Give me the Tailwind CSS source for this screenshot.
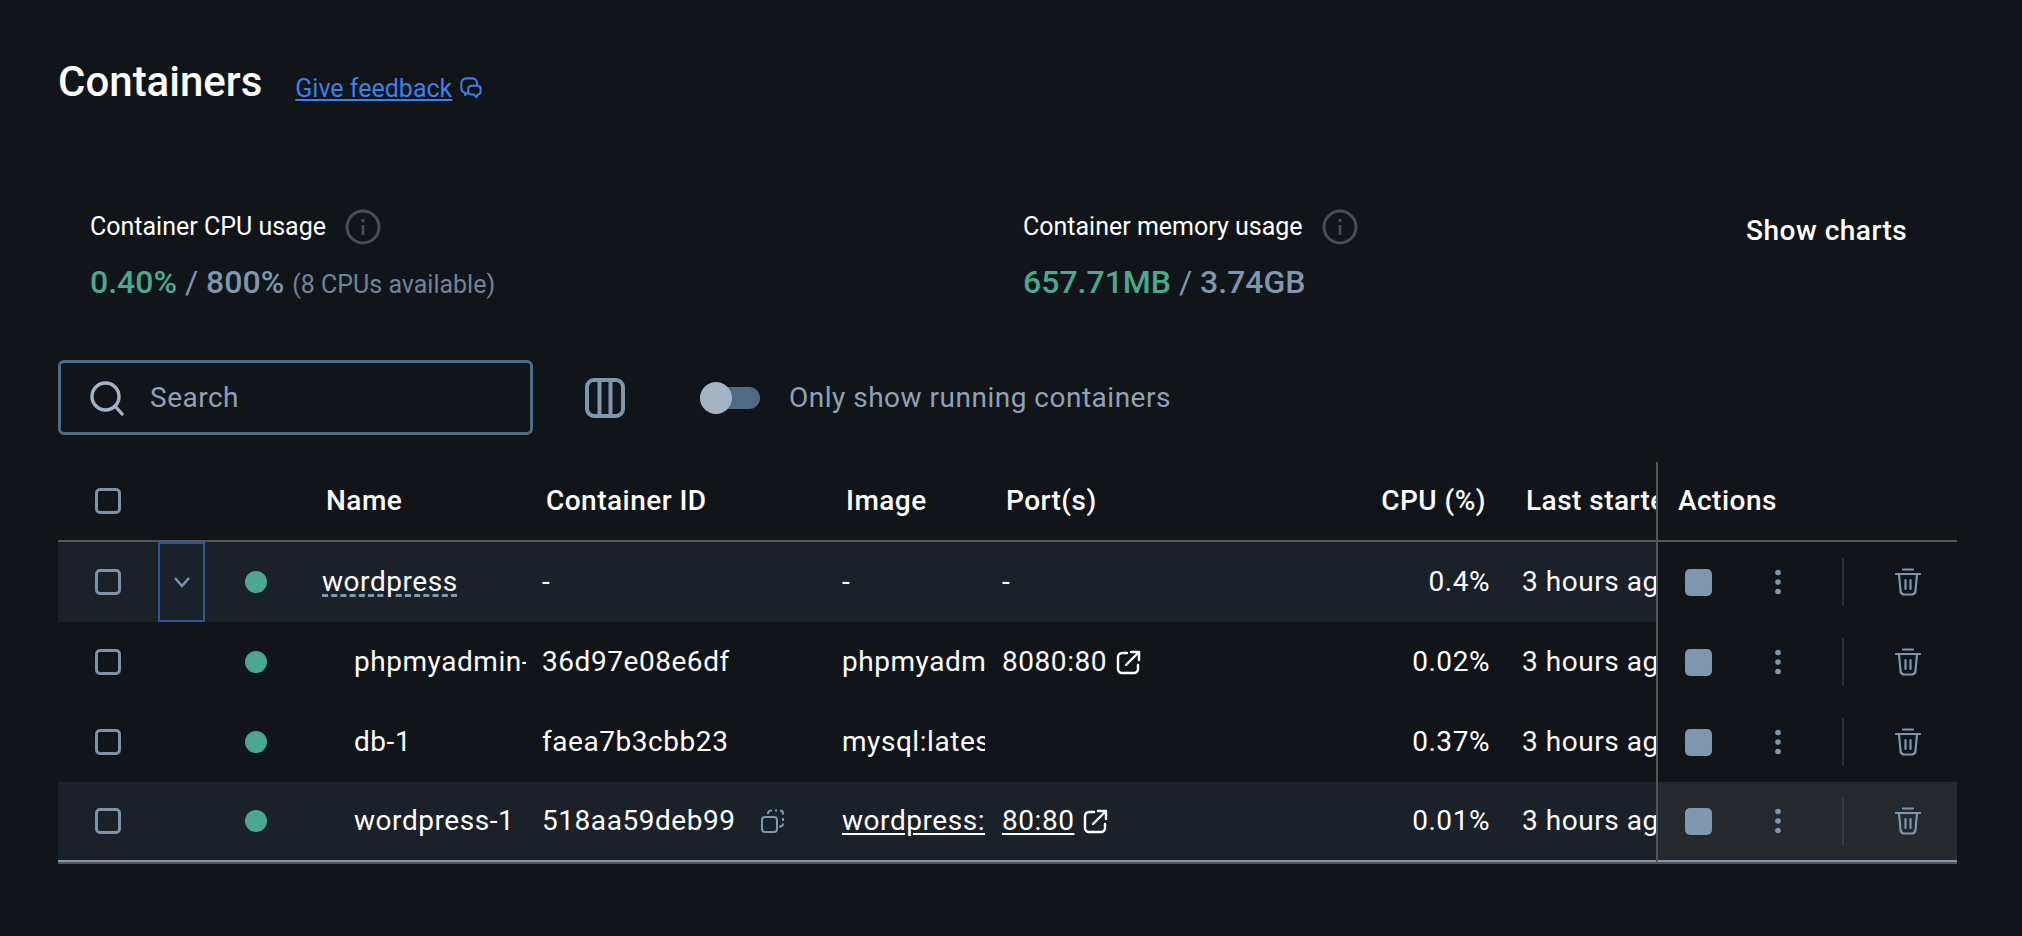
<!DOCTYPE html>
<html>
<head>
<meta charset="utf-8">
<script src="https://cdn.jsdelivr.net/npm/@tailwindcss/browser@4"></script>
</head>
<body class="m-0 h-[936px] w-[2022px] overflow-hidden bg-[#11151a] font-['Roboto',sans-serif] text-white">
<div class="flex w-[1899px] flex-col ml-[58px]">
  <!-- Title -->
  <div class="flex h-[64px] items-center mt-[50px]">
    <h1 class="text-[42px] font-medium leading-none">Containers</h1>
    <a class="ml-[33px] mt-[12px] text-[25px] leading-none text-[#3f7fe8] underline underline-offset-2">Give feedback</a>
    <svg class="ml-[8px] mt-[12px]" width="22" height="22" viewBox="0 0 24 24" fill="none" stroke="#3f7fe8" stroke-width="2.200" stroke-linejoin="round"><path d="M10 17.500H8l-2.500 2.200v-2.600A5 5 0 0 1 1.500 12V6.500a5 5 0 0 1 5-5h7a5 5 0 0 1 5 5v3"/><path d="M12.500 9.500h7a3.500 3.500 0 0 1 3 3.500v2.500a3.500 3.500 0 0 1-3 3.500l-1.500 3-3-3h-2.500a3.500 3.500 0 0 1-3.500-3.500V13a3.500 3.500 0 0 1 3.500-3.500Z"/></svg>
  </div>
  <!-- Stats -->
  <div class="flex h-[130px] mt-[90px] pl-[32px] relative">
    <div class="w-[933px]">
      <div class="flex h-[36px] items-center mt-[5px] text-[25px]">Container CPU usage
        <svg class="ml-[19px]" width="36" height="36" viewBox="0 0 36 36" fill="none"><circle cx="18" cy="18" r="16" stroke="#4a4e53" stroke-width="3"/><circle cx="18" cy="11.500" r="1.800" fill="#4a4e53"/><path d="M18 16v10" stroke="#4a4e53" stroke-width="2.600"/></svg>
      </div>
      <div class="mt-[13px] flex h-[44px] items-baseline font-medium text-[32px] text-[#7e96ae]"><span class="text-[#4ba88f]">0.40%</span><span class="font-normal">&nbsp;/&nbsp;</span>800%<span class="ml-[8px] text-[25px] font-normal text-[#6f8499]">(8 CPUs available)</span></div>
    </div>
    <div class="w-[723px]">
      <div class="flex h-[36px] items-center mt-[5px] text-[25px]">Container memory usage
        <svg class="ml-[19px]" width="36" height="36" viewBox="0 0 36 36" fill="none"><circle cx="18" cy="18" r="16" stroke="#4a4e53" stroke-width="3"/><circle cx="18" cy="11.500" r="1.800" fill="#4a4e53"/><path d="M18 16v10" stroke="#4a4e53" stroke-width="2.600"/></svg>
      </div>
      <div class="mt-[13px] flex h-[44px] items-baseline font-medium text-[32px] text-[#7e96ae]"><span class="text-[#4ba88f]">657.71MB</span><span class="font-normal">&nbsp;/&nbsp;</span>3.74GB</div>
    </div>
    <div class="mt-[11px] text-[28px] font-medium leading-[32px] tracking-[0.500px] whitespace-nowrap">Show charts</div>
  </div>
  <!-- Toolbar -->
  <div class="flex h-[75px] items-center mt-[26px]">
    <div class="flex h-[75px] w-[475px] items-center rounded-[6px] border-[3px] border-[#4f6a85] pl-[28px]">
      <svg width="36" height="36" viewBox="0 0 36 36" fill="none" stroke="#a3b3c4" stroke-width="3.400"><circle cx="16.500" cy="16.500" r="13.500"/><path d="m26 26 7 8" stroke-linecap="round"/></svg>
      <span class="ml-[25px] text-[28px] tracking-[0.500px] text-[#8fa2b5]">Search</span>
    </div>
    <svg class="ml-[52px]" width="40" height="42" viewBox="0 0 40 42" fill="none" stroke="#7e96ae" stroke-width="4"><rect x="2" y="3" width="36" height="36" rx="7"/><path d="M14.500 3v36M25.500 3v36"/></svg>
    <div class="relative ml-[75px] h-[22px] w-[60px] rounded-full bg-[#4f6a85]">
      <div class="absolute left-0 top-[-5px] h-[32px] w-[32px] rounded-full bg-[#a3b3c4]"></div>
    </div>
    <span class="ml-[29px] text-[28px] tracking-[0.500px] text-[#8fa2b5]">Only show running containers</span>
  </div>
  <!-- Table -->
  <div class="mt-[27px] flex text-[28px] tracking-[0.550px]">
    <div class="w-[1598px]">
      <div class="flex h-[80px] items-center border-b-2 border-[#555] font-medium tracking-[0.470px]">
        <div class="w-[100px] pl-[37px]"><div class="h-[26px] w-[26px] rounded-[5px] border-[3px] border-[#7e92a6]"></div></div>
        <div class="w-[164px]"></div>
        <div class="w-[220px] pl-[4px]">Name</div>
        <div class="w-[300px] pl-[4px]">Container ID</div>
        <div class="w-[160px] pl-[4px]">Image</div>
        <div class="w-[320px] pl-[4px]">Port(s)</div>
        <div class="w-[200px] pr-[36px] text-right">CPU (%)</div>
        <div class="w-[134px] overflow-hidden whitespace-nowrap pl-[4px]">Last started</div>
      </div>
      <div class="flex h-[80px] items-center bg-[#1a2129]">
        <div class="w-[100px] pl-[37px]"><div class="h-[26px] w-[26px] rounded-[5px] border-[3px] border-[#7e92a6]"></div></div>
        <div class="flex h-full w-[47px] items-center justify-center border-2 border-[#2f5597]"><svg width="18" height="12" viewBox="0 0 18 12" fill="none" stroke="#7e96ae" stroke-width="2.400"><path d="m2 2 7 8 7-8"/></svg></div>
        <div class="w-[117px] pl-[40px]"><div class="h-[22px] w-[22px] rounded-full bg-[#4ba88f]"></div></div>
        <div class="w-[220px]"><span class="underline decoration-dashed decoration-[#7e96ae] decoration-[3px] underline-offset-[3px]">wordpress</span></div>
        <div class="w-[300px]">-</div>
        <div class="w-[160px]">-</div>
        <div class="w-[320px]">-</div>
        <div class="w-[200px] pr-[32px] text-right">0.4%</div>
        <div class="w-[134px] overflow-hidden whitespace-nowrap">3 hours ago</div>
      </div>
      <div class="flex h-[80px] items-center">
        <div class="w-[100px] pl-[37px]"><div class="h-[26px] w-[26px] rounded-[5px] border-[3px] border-[#7e92a6]"></div></div>
        <div class="w-[47px]"></div>
        <div class="w-[117px] pl-[40px]"><div class="h-[22px] w-[22px] rounded-full bg-[#4ba88f]"></div></div>
        <div class="w-[220px] pl-[32px] pr-[16px]"><div class="overflow-hidden whitespace-nowrap">phpmyadmin-1</div></div>
        <div class="w-[300px]">36d97e08e6df</div>
        <div class="w-[160px] pr-[17px]"><div class="overflow-hidden whitespace-nowrap">phpmyadmin:latest</div></div>
        <div class="flex w-[320px] items-center">8080:80
          <svg class="ml-[9px]" width="26" height="26" viewBox="0 0 26 26" fill="none" stroke="#fff" stroke-width="2.400" stroke-linecap="round" stroke-linejoin="round"><path d="M11 4H6a4 4 0 0 0-4 4v12a4 4 0 0 0 4 4h12a4 4 0 0 0 4-4v-4"/><path d="M10 16 23 3M15 3h8v8"/></svg>
        </div>
        <div class="w-[200px] pr-[32px] text-right">0.02%</div>
        <div class="w-[134px] overflow-hidden whitespace-nowrap">3 hours ago</div>
      </div>
      <div class="flex h-[80px] items-center">
        <div class="w-[100px] pl-[37px]"><div class="h-[26px] w-[26px] rounded-[5px] border-[3px] border-[#7e92a6]"></div></div>
        <div class="w-[47px]"></div>
        <div class="w-[117px] pl-[40px]"><div class="h-[22px] w-[22px] rounded-full bg-[#4ba88f]"></div></div>
        <div class="w-[220px] pl-[32px] pr-[16px]"><div class="overflow-hidden whitespace-nowrap">db-1</div></div>
        <div class="w-[300px]">faea7b3cbb23</div>
        <div class="w-[160px] pr-[17px]"><div class="overflow-hidden whitespace-nowrap">mysql:latest</div></div>
        <div class="w-[320px]"></div>
        <div class="w-[200px] pr-[32px] text-right">0.37%</div>
        <div class="w-[134px] overflow-hidden whitespace-nowrap">3 hours ago</div>
      </div>
      <div class="flex h-[80px] items-center border-b-2 border-[#7e96ae] bg-[#1a2129]">
        <div class="w-[100px] pl-[37px]"><div class="h-[26px] w-[26px] rounded-[5px] border-[3px] border-[#7e92a6]"></div></div>
        <div class="w-[47px]"></div>
        <div class="w-[117px] pl-[40px]"><div class="h-[22px] w-[22px] rounded-full bg-[#4ba88f]"></div></div>
        <div class="w-[220px] pl-[32px] pr-[16px]"><div class="overflow-hidden whitespace-nowrap">wordpress-1</div></div>
        <div class="flex w-[300px] items-center">518aa59deb99
          <svg class="ml-[24px]" width="24" height="24" viewBox="0 0 24 24" fill="none" stroke="#7e96ae" stroke-width="2"><rect x="2" y="8" width="15" height="15" rx="3"/><path d="M8 5V4.500a3 3 0 0 1 3-3h1M15 1.500h2M20 1.500a3 3 0 0 1 3 3v1M23 9v3M23 14.500a3 3 0 0 1-3 3h-1"/></svg>
        </div>
        <div class="w-[160px] pr-[17px]"><div class="overflow-hidden whitespace-nowrap underline underline-offset-[3px]">wordpress:latest</div></div>
        <div class="flex w-[320px] items-center"><span class="underline underline-offset-[3px]">80:80</span>
          <svg class="ml-[9px]" width="26" height="26" viewBox="0 0 26 26" fill="none" stroke="#fff" stroke-width="2.400" stroke-linecap="round" stroke-linejoin="round"><path d="M11 4H6a4 4 0 0 0-4 4v12a4 4 0 0 0 4 4h12a4 4 0 0 0 4-4v-4"/><path d="M10 16 23 3M15 3h8v8"/></svg>
        </div>
        <div class="w-[200px] pr-[32px] text-right">0.01%</div>
        <div class="w-[134px] overflow-hidden whitespace-nowrap">3 hours ago</div>
      </div>
      <div class="h-[2px] bg-[#555]"></div>
    </div>
    <div class="w-[301px] border-l-2 border-[#555]">
      <div class="flex h-[80px] items-center border-b-2 border-[#555] pl-[20px] font-medium tracking-[0.470px]">Actions</div>
      <div class="flex h-[80px] items-center pl-[27px]">
        <div class="h-[27px] w-[27px] rounded-[5px] bg-[#7e96ae]"></div>
        <svg class="ml-[62px]" width="8" height="28" viewBox="0 0 8 28" fill="#7e96ae"><circle cx="4" cy="4.500" r="2.800"/><circle cx="4" cy="14" r="2.800"/><circle cx="4" cy="23.500" r="2.800"/></svg>
        <div class="ml-[60px] h-[48px] w-[2px] bg-[#2a2e33]"></div>
        <svg class="ml-[51px]" width="26" height="28" viewBox="0 0 26 28" fill="none" stroke="#7e96ae" stroke-width="2.200" stroke-linecap="round" stroke-linejoin="round"><path d="M8 1.500h10M1 6h24M4 6l1.500 17a4 4 0 0 0 4 3.500h7a4 4 0 0 0 4-3.500L22 6M10.500 12v9M15.500 12v9"/></svg>
      </div>
      <div class="flex h-[80px] items-center pl-[27px]">
        <div class="h-[27px] w-[27px] rounded-[5px] bg-[#7e96ae]"></div>
        <svg class="ml-[62px]" width="8" height="28" viewBox="0 0 8 28" fill="#7e96ae"><circle cx="4" cy="4.500" r="2.800"/><circle cx="4" cy="14" r="2.800"/><circle cx="4" cy="23.500" r="2.800"/></svg>
        <div class="ml-[60px] h-[48px] w-[2px] bg-[#2a2e33]"></div>
        <svg class="ml-[51px]" width="26" height="28" viewBox="0 0 26 28" fill="none" stroke="#7e96ae" stroke-width="2.200" stroke-linecap="round" stroke-linejoin="round"><path d="M8 1.500h10M1 6h24M4 6l1.500 17a4 4 0 0 0 4 3.500h7a4 4 0 0 0 4-3.500L22 6M10.500 12v9M15.500 12v9"/></svg>
      </div>
      <div class="flex h-[80px] items-center pl-[27px]">
        <div class="h-[27px] w-[27px] rounded-[5px] bg-[#7e96ae]"></div>
        <svg class="ml-[62px]" width="8" height="28" viewBox="0 0 8 28" fill="#7e96ae"><circle cx="4" cy="4.500" r="2.800"/><circle cx="4" cy="14" r="2.800"/><circle cx="4" cy="23.500" r="2.800"/></svg>
        <div class="ml-[60px] h-[48px] w-[2px] bg-[#2a2e33]"></div>
        <svg class="ml-[51px]" width="26" height="28" viewBox="0 0 26 28" fill="none" stroke="#7e96ae" stroke-width="2.200" stroke-linecap="round" stroke-linejoin="round"><path d="M8 1.500h10M1 6h24M4 6l1.500 17a4 4 0 0 0 4 3.500h7a4 4 0 0 0 4-3.500L22 6M10.500 12v9M15.500 12v9"/></svg>
      </div>
      <div class="flex h-[80px] items-center border-b-2 border-[#7e96ae] bg-[#25282d] pl-[27px]">
        <div class="h-[27px] w-[27px] rounded-[5px] bg-[#7e96ae]"></div>
        <svg class="ml-[62px]" width="8" height="28" viewBox="0 0 8 28" fill="#7e96ae"><circle cx="4" cy="4.500" r="2.800"/><circle cx="4" cy="14" r="2.800"/><circle cx="4" cy="23.500" r="2.800"/></svg>
        <div class="ml-[60px] h-[48px] w-[2px] bg-[#3a3e43]"></div>
        <svg class="ml-[51px]" width="26" height="28" viewBox="0 0 26 28" fill="none" stroke="#7e96ae" stroke-width="2.200" stroke-linecap="round" stroke-linejoin="round"><path d="M8 1.500h10M1 6h24M4 6l1.500 17a4 4 0 0 0 4 3.500h7a4 4 0 0 0 4-3.500L22 6M10.500 12v9M15.500 12v9"/></svg>
      </div>
      <div class="h-[2px] bg-[#555]"></div>
    </div>
  </div>
</div>
</body>
</html>
